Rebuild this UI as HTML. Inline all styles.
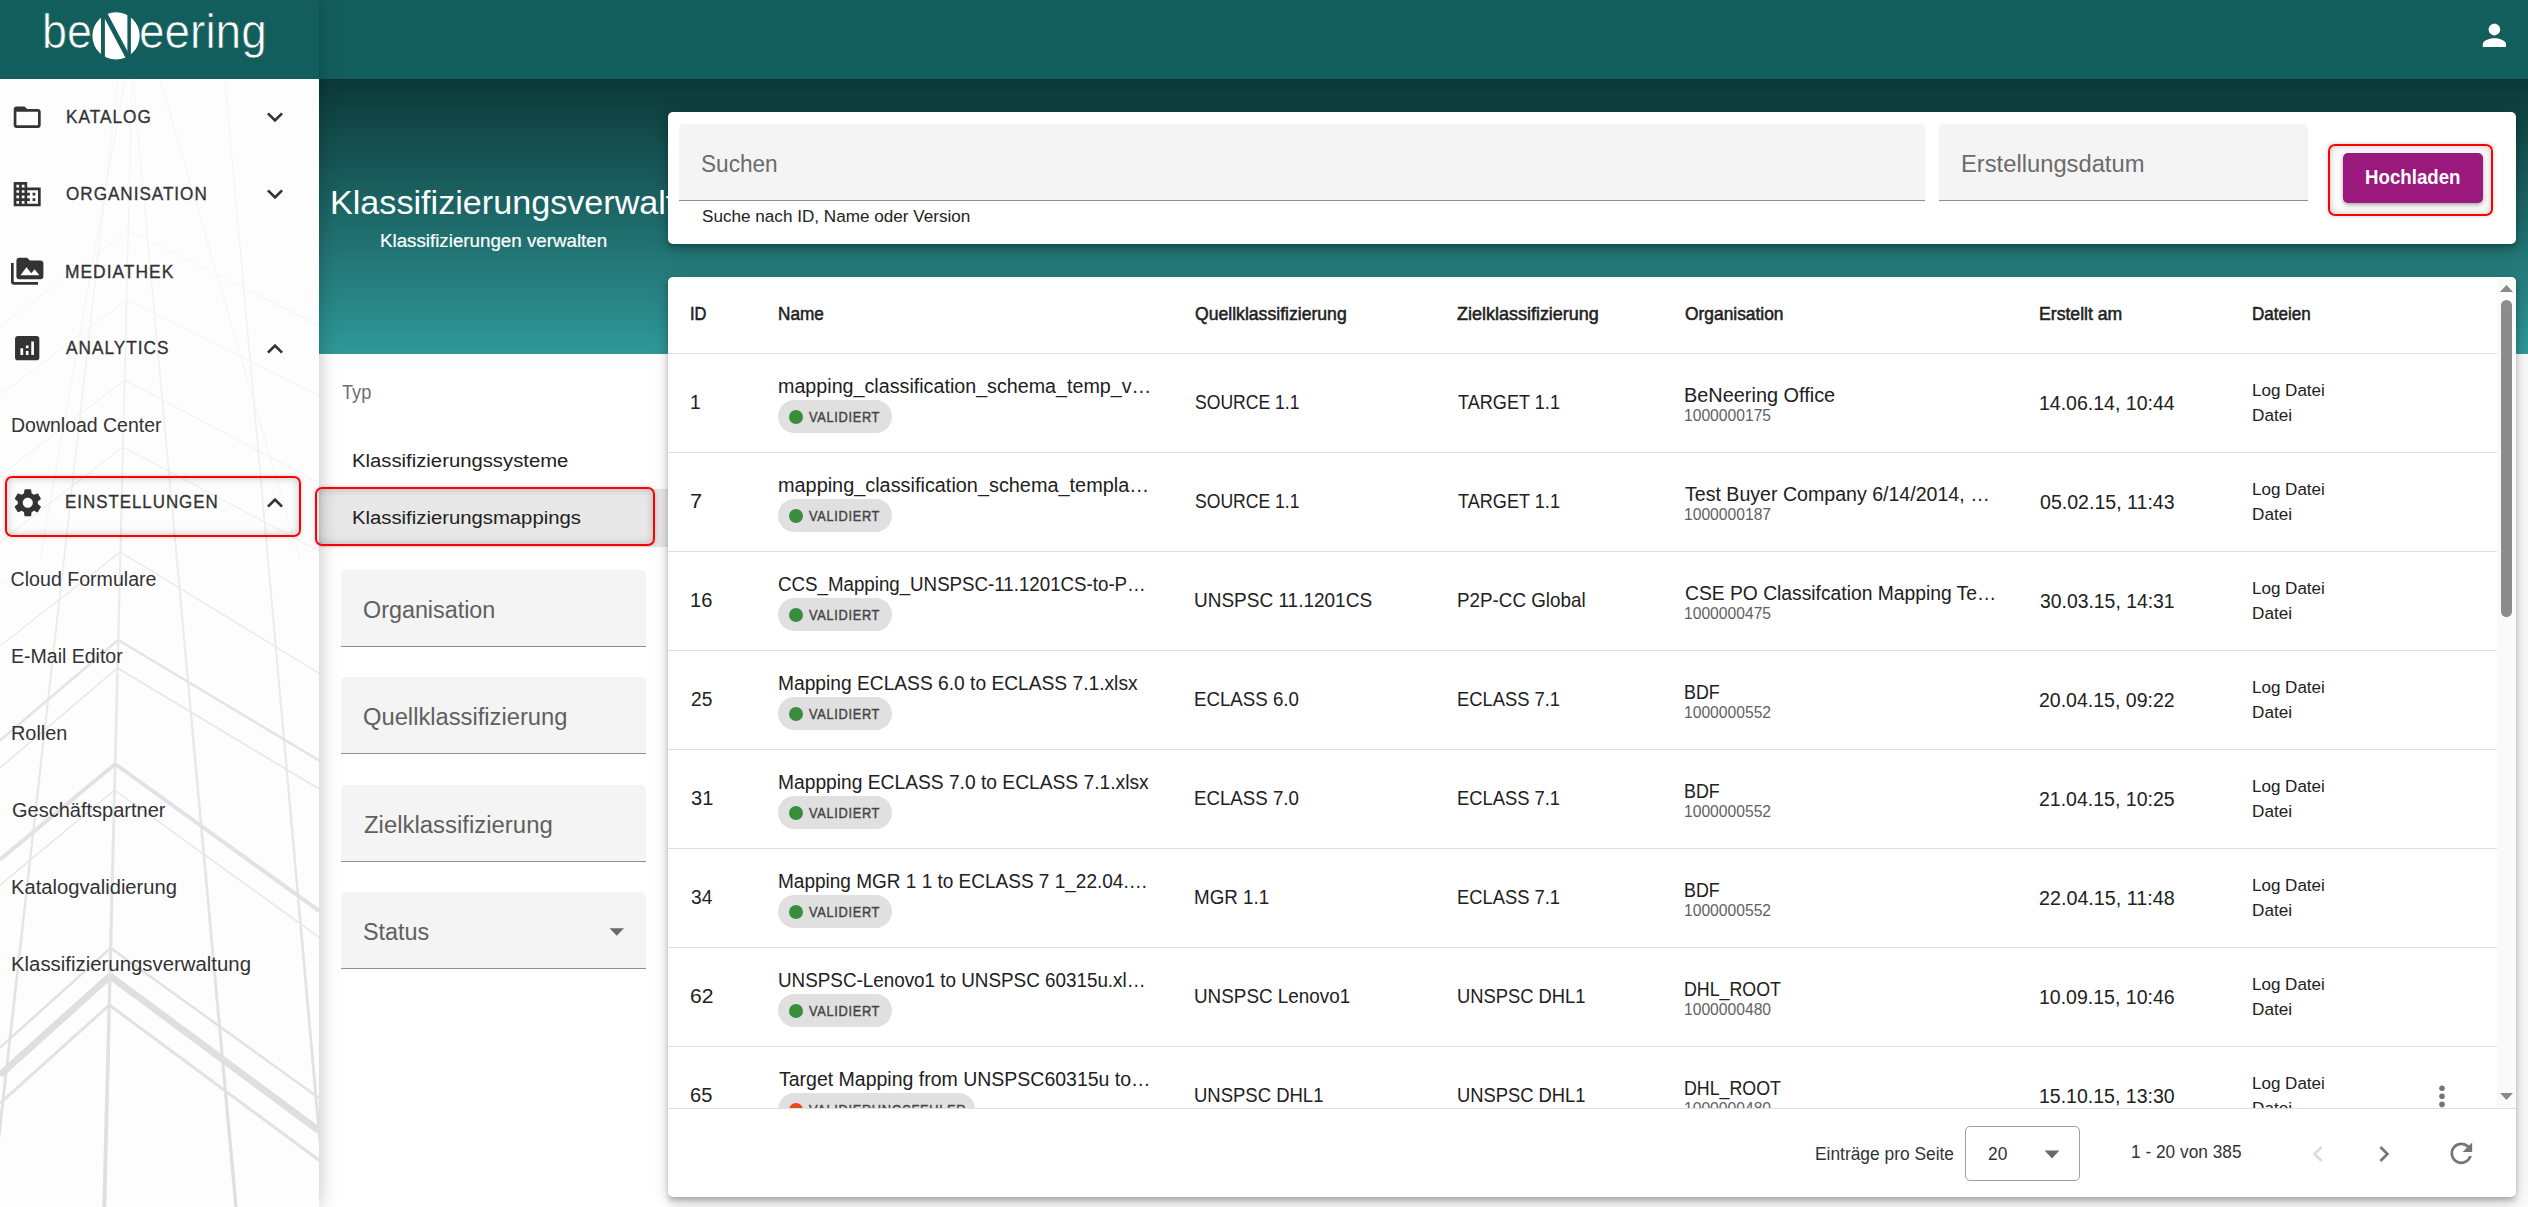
<!DOCTYPE html>
<html><head><meta charset="utf-8"><title>Klassifizierungsverwaltung</title>
<style>
html,body{margin:0;padding:0;width:2528px;height:1207px;overflow:hidden;background:#fafafa;font-family:"Liberation Sans",sans-serif;}
.a{position:absolute;}
.t{position:absolute;white-space:nowrap;transform-origin:0 0;font-family:"Liberation Sans",sans-serif;}
.cg{position:absolute;left:0;top:0;width:2528px;height:1207px;}
.fld{position:absolute;background:#f4f4f4;border-radius:5px 5px 0 0;border-bottom:1px solid #8f8f8f;box-sizing:border-box;}
.hl{position:absolute;left:668px;width:1829px;height:1px;background:#e0e0e0;}
.chip{position:absolute;left:778px;height:33px;border-radius:17px;background:#e0e0e0;}
.dot{position:absolute;left:10.9px;top:9.7px;width:14px;height:14px;border-radius:50%;}
.box{position:absolute;border:2px solid #ff0000;border-radius:7px;box-sizing:border-box;box-shadow:inset 0 0 9px rgba(0,0,0,.22),0 0 5px rgba(0,0,0,.18);}
svg{position:absolute;overflow:visible;}
</style></head><body>
<!-- top bar -->
<div class="a" style="left:0;top:0;width:2528px;height:79px;background:#125e5d"></div>
<!-- header gradient -->
<div class="a" style="left:319px;top:79px;width:2209px;height:275px;background:linear-gradient(#0c3838,#2f9898)"></div>
<!-- filter panel -->
<div class="a" style="left:319px;top:354px;width:349px;height:853px;background:#fff"></div>
<div class="a" style="left:319px;top:489px;width:349px;height:58px;background:#e8e8e8"></div>
<div class="fld" style="left:341px;top:570px;width:305px;height:77px"></div>
<div class="fld" style="left:341px;top:677px;width:305px;height:77px"></div>
<div class="fld" style="left:341px;top:785px;width:305px;height:77px"></div>
<div class="fld" style="left:341px;top:892px;width:305px;height:77px"></div>
<svg style="left:0;top:0" width="1" height="1"><polygon points="609.5,928.2 624,928.2 616.75,935.7" fill="#6a6a6a"/></svg>

<!-- sidebar -->
<div class="a" style="left:0;top:0;width:319px;height:1207px;background:#fdfdfd;box-shadow:0 0 18px rgba(0,0,0,.25);overflow:hidden">
 <div class="a" style="left:0;top:0;width:319px;height:79px;background:#125e5d"></div>
 <svg style="left:0;top:0" width="319" height="1207"><defs><linearGradient id="vg" gradientUnits="userSpaceOnUse" x1="0" y1="79" x2="0" y2="1207"><stop offset="0" stop-color="#f5f5f5"/><stop offset="0.35" stop-color="#eeeeee"/><stop offset="1" stop-color="#dedede"/></linearGradient></defs><g fill="none" stroke-linecap="butt"><polygon fill="url(#vg)" points="131.6,79.0 102.3,1207.0 106.3,1207.0 132.4,79.0"/><polygon fill="url(#vg)" points="117.6,79.0 -10.5,1206.8 -7.5,1207.2 118.4,79.0"/><polygon fill="url(#vg)" points="132.6,79.0 234.3,1207.2 237.7,1206.8 133.4,79.0"/><polygon fill="url(#vg)" points="224.6,79.0 318.5,1142.1 321.5,1141.9 225.4,79.0"/><line x1="125.0" y1="79.0" x2="40.0" y2="560.0" stroke="#f3f3f3" stroke-width="1"/><line x1="160.0" y1="79.0" x2="300.0" y2="560.0" stroke="#f3f3f3" stroke-width="1"/><line x1="128.3" y1="230.0" x2="0.0" y2="326.2" stroke="#f4f4f4" stroke-width="1"/><line x1="128.3" y1="230.0" x2="319.0" y2="325.4" stroke="#f4f4f4" stroke-width="1"/><line x1="126.6" y1="300.0" x2="0.0" y2="394.9" stroke="#f2f2f2" stroke-width="1"/><line x1="126.6" y1="300.0" x2="319.0" y2="396.2" stroke="#f2f2f2" stroke-width="1"/><line x1="124.6" y1="380.0" x2="0.0" y2="475.9" stroke="#efefef" stroke-width="1"/><line x1="124.6" y1="380.0" x2="319.0" y2="483.0" stroke="#efefef" stroke-width="1"/><line x1="123.0" y1="447.0" x2="0.0" y2="541.7" stroke="#ebebeb" stroke-width="1"/><line x1="123.0" y1="447.0" x2="319.0" y2="550.9" stroke="#ebebeb" stroke-width="1"/><line x1="120.4" y1="552.0" x2="0.0" y2="645.9" stroke="#e8e8e8" stroke-width="1.2"/><line x1="120.4" y1="552.0" x2="319.0" y2="673.2" stroke="#e8e8e8" stroke-width="1.2"/><line x1="118.2" y1="640.0" x2="0.0" y2="740.5" stroke="#e4e4e4" stroke-width="2.5"/><line x1="118.2" y1="640.0" x2="319.0" y2="760.5" stroke="#e4e4e4" stroke-width="2.5"/><line x1="117.5" y1="668.0" x2="0.0" y2="767.9" stroke="#e6e6e6" stroke-width="1.5"/><line x1="117.5" y1="668.0" x2="319.0" y2="788.9" stroke="#e6e6e6" stroke-width="1.5"/><line x1="115.2" y1="764.0" x2="0.0" y2="859.6" stroke="#e2e2e2" stroke-width="4"/><line x1="115.2" y1="764.0" x2="319.0" y2="910.8" stroke="#e2e2e2" stroke-width="4"/><line x1="114.5" y1="790.0" x2="0.0" y2="885.1" stroke="#e6e6e6" stroke-width="1.5"/><line x1="114.5" y1="790.0" x2="319.0" y2="937.2" stroke="#e6e6e6" stroke-width="1.5"/><line x1="110.7" y1="948.0" x2="0.0" y2="1047.6" stroke="#e2e2e2" stroke-width="2.5"/><line x1="110.7" y1="948.0" x2="319.0" y2="1098.0" stroke="#e2e2e2" stroke-width="2.5"/><line x1="110.0" y1="976.0" x2="0.0" y2="1075.0" stroke="#dfdfdf" stroke-width="7"/><line x1="110.0" y1="976.0" x2="319.0" y2="1130.7" stroke="#dfdfdf" stroke-width="7"/><line x1="109.3" y1="1005.0" x2="0.0" y2="1103.3" stroke="#e2e2e2" stroke-width="3"/><line x1="109.3" y1="1005.0" x2="319.0" y2="1160.2" stroke="#e2e2e2" stroke-width="3"/></g></svg>
 <!-- logo circle N -->
 <svg style="left:0;top:0" width="319" height="79">
  <defs><clipPath id="lc"><circle cx="116.05" cy="35.85" r="24.6"/></clipPath></defs>
  <circle cx="116.05" cy="35.85" r="23.65" fill="#fff"/>
  <g clip-path="url(#lc)" fill="#125e5d">
  <rect x="101" y="8" width="3.9" height="56"/>
  <rect x="127.4" y="8" width="3.5" height="56"/>
  <polygon points="101,11.55 106.7,12 131.1,58 127.75,62"/>
  </g>
 </svg>
 <!-- icons -->
 <svg style="left:11.2px;top:100.7px" width="32.4" height="32.4" viewBox="0 0 24 24"><path fill="#333" d="M20 6h-8l-2-2H4c-1.1 0-1.99.9-1.99 2L2 18c0 1.1.9 2 2 2h16c1.1 0 2-.9 2-2V8c0-1.1-.9-2-2-2zm0 12H4V8h16v10z"/></svg>
 <svg style="left:11.4px;top:177.8px" width="32.4" height="32.4" viewBox="0 0 24 24"><path fill="#333" d="M12 7V3H2v18h20V7H12zM6 19H4v-2h2v2zm0-4H4v-2h2v2zm0-4H4V9h2v2zm0-4H4V5h2v2zm4 12H8v-2h2v2zm0-4H8v-2h2v2zm0-4H8V9h2v2zm0-4H8V5h2v2zm10 12h-8v-2h2v-2h-2v-2h2v-2h-2V9h8v10zm-2-8h-2v2h2v-2zm0 4h-2v2h2v-2z"/></svg>
 <svg style="left:11.1px;top:255.2px" width="32.4" height="32.4" viewBox="0 0 24 24"><path fill="#333" d="M2 6H0v5h.01L0 20c0 1.1.9 2 2 2h18v-2H2V6zm20-2h-8l-2-2H6c-1.1 0-1.99.9-1.99 2L4 16c0 1.1.9 2 2 2h16c1.1 0 2-.9 2-2V6c0-1.1-.9-2-2-2zM7 15l4.5-6 3.5 4.51 2.5-3.01L21 15H7z"/></svg>
 <svg style="left:11.1px;top:332.2px" width="32.4" height="32.4" viewBox="0 0 24 24"><path fill="#333" d="M19 3H5c-1.1 0-2 .9-2 2v14c0 1.1.9 2 2 2h14c1.1 0 2-.9 2-2V5c0-1.1-.9-2-2-2zM9 17H7v-5h2v5zm4 0h-2v-3h2v3zm0-5h-2v-2h2v2zm4 5h-2V7h2v10z"/></svg>
 <svg style="left:10.65px;top:485.7px" width="33.6" height="33.6" viewBox="0 0 24 24"><path fill="#333" d="M19.14 12.94c.04-.3.06-.61.06-.94 0-.32-.02-.64-.07-.94l2.03-1.58c.18-.14.23-.41.12-.61l-1.92-3.32c-.12-.22-.37-.29-.59-.22l-2.39.96c-.5-.38-1.03-.7-1.62-.94l-.36-2.54c-.04-.24-.24-.41-.48-.41h-3.84c-.24 0-.43.17-.47.41l-.36 2.540c-.59.24-1.13.57-1.62.94l-2.39-.96c-.22-.08-.47 0-.59.22L2.74 8.870c-.12.21-.08.47.12.61l2.03 1.58c-.05.3-.09.63-.09.94s.02.64.07.94l-2.03 1.58c-.18.14-.23.41-.12.61l1.92 3.32c.12.22.37.29.59.22l2.39-.96c.5.38 1.03.7 1.62.94l.36 2.54c.05.24.24.41.48.41h3.84c.24 0 .44-.17.47-.41l.36-2.54c.59-.24 1.13-.56 1.62-.94l2.39.96c.22.08.47 0 .59-.22l1.92-3.32c.12-.22.07-.47-.12-.61l-2.01-1.580zM12 15.6c-1.98 0-3.6-1.62-3.6-3.6s1.62-3.6 3.6-3.6 3.6 1.62 3.6 3.6-1.62 3.6-3.6 3.6z"/></svg>
 <svg style="left:258.9px;top:100.9px" width="32" height="32" viewBox="0 0 24 24"><path fill="#333" d="M16.59 8.59L12 13.17 7.41 8.59 6 10l6 6 6-6z"/></svg>
 <svg style="left:258.9px;top:178.4px" width="32" height="32" viewBox="0 0 24 24"><path fill="#333" d="M16.59 8.59L12 13.17 7.41 8.59 6 10l6 6 6-6z"/></svg>
 <svg style="left:258.9px;top:332.6px" width="32" height="32" viewBox="0 0 24 24"><path fill="#333" d="M12 8l-6 6 1.41 1.41L12 10.83l4.59 4.58L18 14z"/></svg>
 <svg style="left:258.9px;top:486.75px" width="32" height="32" viewBox="0 0 24 24"><path fill="#333" d="M12 8l-6 6 1.41 1.41L12 10.83l4.59 4.58L18 14z"/></svg>
</div>
<!-- user icon -->
<svg style="left:2476.6px;top:18.3px" width="34.8" height="34.8" viewBox="0 0 24 24"><path fill="#fff" d="M12 12c2.21 0 4-1.79 4-4s-1.79-4-4-4-4 1.79-4 4 1.79 4 4 4zm0 2c-2.670 0-8 1.34-8 4v2h16v-2c0-2.66-5.33-4-8-4z"/></svg>

<!-- search card -->
<div class="a" style="left:668px;top:112px;width:1848px;height:132px;background:#fff;border-radius:5px;box-shadow:0 3px 5px -1px rgba(0,0,0,.2),0 6px 10px 0 rgba(0,0,0,.14),0 1px 18px 0 rgba(0,0,0,.12)"></div>
<div class="fld" style="left:679px;top:124px;width:1246px;height:77px"></div>
<div class="fld" style="left:1939px;top:124px;width:369px;height:77px"></div>
<div class="a" style="left:2343px;top:153px;width:140px;height:50px;background:#9b197c;border-radius:5px;box-shadow:0 2px 4px rgba(0,0,0,.35)"></div>

<!-- table card -->
<div class="a" style="left:668px;top:277px;width:1848px;height:920px;background:#fff;border-radius:5px;box-shadow:0 3px 5px -1px rgba(0,0,0,.2),0 6px 10px 0 rgba(0,0,0,.14),0 1px 18px 0 rgba(0,0,0,.12);overflow:hidden">
 <div class="a" style="left:1829px;top:0;width:19px;height:831px;background:#fafafa"></div>
</div>
<div class="hl" style="top:353px"></div>
<div class="cg" style="clip-path:inset(353px 31px 99px 668px)">
 <div class="hl" style="top:452px"></div><div class="hl" style="top:551px"></div><div class="hl" style="top:650px"></div>
 <div class="hl" style="top:749px"></div><div class="hl" style="top:848px"></div><div class="hl" style="top:947px"></div><div class="hl" style="top:1046px"></div>
 <div class="chip" style="top:400px;width:114px"><div class="dot" style="background:#388e3c"></div></div>
 <div class="chip" style="top:499px;width:114px"><div class="dot" style="background:#388e3c"></div></div>
 <div class="chip" style="top:598px;width:114px"><div class="dot" style="background:#388e3c"></div></div>
 <div class="chip" style="top:697px;width:114px"><div class="dot" style="background:#388e3c"></div></div>
 <div class="chip" style="top:796px;width:114px"><div class="dot" style="background:#388e3c"></div></div>
 <div class="chip" style="top:895px;width:114px"><div class="dot" style="background:#388e3c"></div></div>
 <div class="chip" style="top:994px;width:114px"><div class="dot" style="background:#388e3c"></div></div>
 <div class="chip" style="top:1093px;width:197px"><div class="dot" style="background:#e64a19"></div></div>
 <svg style="left:0;top:0" width="1" height="1"><g fill="#757575"><circle cx="2442" cy="1088.2" r="2.8"/><circle cx="2442" cy="1096.3" r="2.8"/><circle cx="2442" cy="1104.4" r="2.8"/></g></svg>
</div>
<div class="a" style="left:668px;top:1108px;width:1848px;height:1px;background:#e0e0e0"></div>
<!-- scrollbar -->
<svg style="left:0;top:0" width="1" height="1">
 <polygon points="2500,292 2513,292 2506.5,285" fill="#8a8a8a"/>
 <rect x="2501" y="300" width="11" height="317" rx="5.5" fill="#8c8c8c"/>
 <polygon points="2500,1093 2513,1093 2506.5,1100" fill="#8a8a8a"/>
</svg>
<!-- pagination -->
<div class="a" style="left:1965px;top:1126px;width:115px;height:55px;border:1px solid #a0a0a0;border-radius:5px;box-sizing:border-box"></div>
<svg style="left:0;top:0" width="1" height="1"><polygon points="2044.6,1150.6 2059.4,1150.6 2052,1158.4" fill="#6a6a6a"/></svg>
<svg style="left:2302.3px;top:1137.9px" width="32" height="32" viewBox="0 0 24 24"><path fill="#dcdcdc" d="M15.41 7.41L14 6l-6 6 6 6 1.41-1.41L10.83 12z"/></svg>
<svg style="left:2368.4px;top:1137.9px" width="32" height="32" viewBox="0 0 24 24"><path fill="#757575" d="M10 6L8.59 7.41 13.17 12l-4.58 4.59L10 18l6-6z"/></svg>
<svg style="left:2444.9px;top:1137.3px" width="32.6" height="32.6" viewBox="0 0 24 24"><path fill="#757575" d="M17.65 6.35C16.2 4.9 14.21 4 12 4c-4.42 0-7.99 3.58-7.99 8s3.57 8 7.99 8c3.73 0 6.84-2.55 7.73-6h-2.08c-.82 2.33-3.04 4-5.65 4-3.31 0-6-2.69-6-6s2.69-6 6-6c1.66 0 3.140.69 4.22 1.78L13 11h7V4l-2.35 2.35z"/></svg>

<div class="t" style="left:66.19px;top:107.32px;font-size:19.0px;line-height:19.0px;color:#333333;transform:scaleX(0.9068);letter-spacing:1.1px;-webkit-text-stroke:0.35px #333333;">KATALOG</div>
<div class="t" style="left:66.30px;top:184.12px;font-size:19.0px;line-height:19.0px;color:#333333;transform:scaleX(0.9001);letter-spacing:1.1px;-webkit-text-stroke:0.35px #333333;">ORGANISATION</div>
<div class="t" style="left:65.38px;top:261.52px;font-size:19.0px;line-height:19.0px;color:#333333;transform:scaleX(0.9161);letter-spacing:1.1px;-webkit-text-stroke:0.35px #333333;">MEDIATHEK</div>
<div class="t" style="left:66.30px;top:338.22px;font-size:19.0px;line-height:19.0px;color:#333333;transform:scaleX(0.9074);letter-spacing:1.1px;-webkit-text-stroke:0.35px #333333;">ANALYTICS</div>
<div class="t" style="left:65.41px;top:492.32px;font-size:19.0px;line-height:19.0px;color:#333333;transform:scaleX(0.8902);letter-spacing:1.1px;-webkit-text-stroke:0.35px #333333;">EINSTELLUNGEN</div>
<div class="t" style="left:10.61px;top:416.21px;font-size:19.6px;line-height:19.6px;color:#333333;transform:scaleX(0.9943);">Download Center</div>
<div class="t" style="left:10.60px;top:570.41px;font-size:19.6px;line-height:19.6px;color:#333333;">Cloud Formulare</div>
<div class="t" style="left:10.60px;top:647.41px;font-size:19.6px;line-height:19.6px;color:#333333;transform:scaleX(0.9962);">E-Mail Editor</div>
<div class="t" style="left:10.59px;top:724.41px;font-size:19.6px;line-height:19.6px;color:#333333;transform:scaleX(1.0140);">Rollen</div>
<div class="t" style="left:11.60px;top:801.41px;font-size:19.6px;line-height:19.6px;color:#333333;transform:scaleX(1.0214);">Geschäftspartner</div>
<div class="t" style="left:10.57px;top:878.41px;font-size:19.6px;line-height:19.6px;color:#333333;transform:scaleX(1.0294);">Katalogvalidierung</div>
<div class="t" style="left:10.56px;top:955.41px;font-size:19.6px;line-height:19.6px;color:#333333;transform:scaleX(1.0394);">Klassifizierungsverwaltung</div>
<div class="t" style="left:42.00px;top:8.07px;font-size:48.0px;line-height:48.0px;color:#ffffff;transform:scaleX(0.9344);-webkit-text-stroke:0.7px #125e5d;">be</div>
<div class="t" style="left:138.89px;top:8.07px;font-size:48.0px;line-height:48.0px;color:#ffffff;transform:scaleX(0.9570);-webkit-text-stroke:0.7px #125e5d;">eering</div>
<div class="t" style="left:380.16px;top:231.66px;font-size:18.0px;line-height:18.0px;color:#ffffff;transform:scaleX(1.0412);-webkit-text-stroke:0.2px #ffffff;">Klassifizierungen verwalten</div>
<div class="t" style="left:342.30px;top:381.92px;font-size:20.3px;line-height:20.3px;color:#6f6f6f;transform:scaleX(0.8979);">Typ</div>
<div class="t" style="left:351.74px;top:450.55px;font-size:19.2px;line-height:19.2px;color:#212121;transform:scaleX(1.0568);">Klassifizierungssysteme</div>
<div class="t" style="left:351.74px;top:508.45px;font-size:19.2px;line-height:19.2px;color:#212121;transform:scaleX(1.0572);">Klassifizierungsmappings</div>
<div class="t" style="left:362.99px;top:599.03px;font-size:23.0px;line-height:23.0px;color:#5f5f5f;transform:scaleX(1.0146);">Organisation</div>
<div class="t" style="left:362.97px;top:706.23px;font-size:23.0px;line-height:23.0px;color:#5f5f5f;transform:scaleX(1.0318);">Quellklassifizierung</div>
<div class="t" style="left:364.00px;top:813.83px;font-size:23.0px;line-height:23.0px;color:#5f5f5f;transform:scaleX(1.0398);">Zielklassifizierung</div>
<div class="t" style="left:362.98px;top:921.03px;font-size:23.0px;line-height:23.0px;color:#5f5f5f;transform:scaleX(1.0156);">Status</div>
<div class="t" style="left:700.93px;top:152.78px;font-size:23.3px;line-height:23.3px;color:#6b6b6b;transform:scaleX(0.9707);">Suchen</div>
<div class="t" style="left:1960.98px;top:153.08px;font-size:23.3px;line-height:23.3px;color:#6b6b6b;transform:scaleX(1.0192);">Erstellungsdatum</div>
<div class="t" style="left:701.90px;top:209.19px;font-size:16.9px;line-height:16.9px;color:#222222;transform:scaleX(1.0133);">Suche nach ID, Name oder Version</div>
<div class="t" style="left:2364.88px;top:167.03px;font-size:20.4px;line-height:20.4px;color:#ffffff;font-weight:bold;transform:scaleX(0.9165);">Hochladen</div>
<div class="t" style="left:689.81px;top:305.32px;font-size:18.4px;line-height:18.4px;color:#222222;transform:scaleX(0.8942);-webkit-text-stroke:0.55px #222222;">ID</div>
<div class="t" style="left:777.67px;top:305.32px;font-size:18.4px;line-height:18.4px;color:#222222;transform:scaleX(0.9325);-webkit-text-stroke:0.55px #222222;">Name</div>
<div class="t" style="left:1195.30px;top:305.32px;font-size:18.4px;line-height:18.4px;color:#222222;transform:scaleX(0.9576);-webkit-text-stroke:0.55px #222222;">Quellklassifizierung</div>
<div class="t" style="left:1457.30px;top:305.32px;font-size:18.4px;line-height:18.4px;color:#222222;transform:scaleX(0.9772);-webkit-text-stroke:0.55px #222222;">Zielklassifizierung</div>
<div class="t" style="left:1684.60px;top:305.32px;font-size:18.4px;line-height:18.4px;color:#222222;transform:scaleX(0.9448);-webkit-text-stroke:0.55px #222222;">Organisation</div>
<div class="t" style="left:2038.54px;top:305.32px;font-size:18.4px;line-height:18.4px;color:#222222;transform:scaleX(0.9586);-webkit-text-stroke:0.55px #222222;">Erstellt am</div>
<div class="t" style="left:2252.37px;top:305.32px;font-size:18.4px;line-height:18.4px;color:#222222;transform:scaleX(0.9266);-webkit-text-stroke:0.55px #222222;">Dateien</div>
<div class="t" style="left:1815.39px;top:1144.25px;font-size:19.2px;line-height:19.2px;color:#333333;transform:scaleX(0.9051);">Einträge pro Seite</div>
<div class="t" style="left:1987.60px;top:1144.25px;font-size:19.2px;line-height:19.2px;color:#333333;transform:scaleX(0.9046);">20</div>
<div class="t" style="left:2130.50px;top:1142.35px;font-size:19.2px;line-height:19.2px;color:#333333;transform:scaleX(0.9008);">1 - 20 von 385</div><div class="cg" style="clip-path:inset(79px 1860px 853px 319px)"><div class="t" style="left:330.09px;top:184.52px;font-size:34.0px;line-height:34.0px;color:#ffffff;transform:scaleX(1.0042);">Klassifizierungsverwaltung</div></div>
<div class="cg" style="clip-path:inset(353px 31px 99px 668px)"><div class="t" style="left:689.72px;top:392.81px;font-size:19.6px;line-height:19.6px;color:#212121;transform:scaleX(0.9778);">1</div><div class="t" style="left:777.59px;top:377.01px;font-size:19.6px;line-height:19.6px;color:#212121;transform:scaleX(1.0052);">mapping_classification_schema_temp_v…</div><div class="t" style="left:1195.10px;top:392.84px;font-size:19.8px;line-height:19.8px;color:#212121;transform:scaleX(0.8884);">SOURCE 1.1</div><div class="t" style="left:1458.00px;top:392.84px;font-size:19.8px;line-height:19.8px;color:#212121;transform:scaleX(0.9154);">TARGET 1.1</div><div class="t" style="left:1683.78px;top:386.19px;font-size:19.5px;line-height:19.5px;color:#212121;transform:scaleX(1.0206);">BeNeering Office</div><div class="t" style="left:1683.84px;top:407.22px;font-size:16.4px;line-height:16.4px;color:#616161;transform:scaleX(0.9551);">1000000175</div><div class="t" style="left:2038.92px;top:392.57px;font-size:20.0px;line-height:20.0px;color:#212121;transform:scaleX(0.9754);">14.06.14, 10:44</div><div class="t" style="left:2252.21px;top:381.94px;font-size:17.2px;line-height:17.2px;color:#212121;transform:scaleX(0.9894);">Log Datei</div><div class="t" style="left:2252.20px;top:406.54px;font-size:17.2px;line-height:17.2px;color:#212121;transform:scaleX(0.9973);">Datei</div><div class="t" style="left:809.30px;top:409.30px;font-size:15.0px;line-height:15.0px;color:#444444;transform:scaleX(0.8534);letter-spacing:0.8px;-webkit-text-stroke:0.45px #444444;">VALIDIERT</div><div class="t" style="left:689.59px;top:491.81px;font-size:19.6px;line-height:19.6px;color:#212121;transform:scaleX(1.1111);">7</div><div class="t" style="left:777.59px;top:476.01px;font-size:19.6px;line-height:19.6px;color:#212121;transform:scaleX(1.0140);">mapping_classification_schema_templa…</div><div class="t" style="left:1195.10px;top:491.84px;font-size:19.8px;line-height:19.8px;color:#212121;transform:scaleX(0.8884);">SOURCE 1.1</div><div class="t" style="left:1458.00px;top:491.84px;font-size:19.8px;line-height:19.8px;color:#212121;transform:scaleX(0.9154);">TARGET 1.1</div><div class="t" style="left:1684.80px;top:485.19px;font-size:19.5px;line-height:19.5px;color:#212121;transform:scaleX(1.0040);">Test Buyer Company 6/14/2014, …</div><div class="t" style="left:1683.84px;top:506.22px;font-size:16.4px;line-height:16.4px;color:#616161;transform:scaleX(0.9551);">1000000187</div><div class="t" style="left:2039.90px;top:491.57px;font-size:20.0px;line-height:20.0px;color:#212121;transform:scaleX(0.9788);">05.02.15, 11:43</div><div class="t" style="left:2252.21px;top:480.94px;font-size:17.2px;line-height:17.2px;color:#212121;transform:scaleX(0.9894);">Log Datei</div><div class="t" style="left:2252.20px;top:505.54px;font-size:17.2px;line-height:17.2px;color:#212121;transform:scaleX(0.9973);">Datei</div><div class="t" style="left:809.30px;top:508.30px;font-size:15.0px;line-height:15.0px;color:#444444;transform:scaleX(0.8534);letter-spacing:0.8px;-webkit-text-stroke:0.45px #444444;">VALIDIERT</div><div class="t" style="left:689.68px;top:590.81px;font-size:19.6px;line-height:19.6px;color:#212121;transform:scaleX(1.0241);">16</div><div class="t" style="left:777.64px;top:575.01px;font-size:19.6px;line-height:19.6px;color:#212121;transform:scaleX(0.9550);">CCS_Mapping_UNSPSC-11.1201CS-to-P…</div><div class="t" style="left:1194.14px;top:590.84px;font-size:19.8px;line-height:19.8px;color:#212121;transform:scaleX(0.9601);">UNSPSC 11.1201CS</div><div class="t" style="left:1457.05px;top:590.84px;font-size:19.8px;line-height:19.8px;color:#212121;transform:scaleX(0.9512);">P2P-CC Global</div><div class="t" style="left:1684.80px;top:584.19px;font-size:19.5px;line-height:19.5px;color:#212121;transform:scaleX(0.9879);">CSE PO Classifcation Mapping Te…</div><div class="t" style="left:1683.84px;top:605.22px;font-size:16.4px;line-height:16.4px;color:#616161;transform:scaleX(0.9551);">1000000475</div><div class="t" style="left:2039.90px;top:590.57px;font-size:20.0px;line-height:20.0px;color:#212121;transform:scaleX(0.9684);">30.03.15, 14:31</div><div class="t" style="left:2252.21px;top:579.94px;font-size:17.2px;line-height:17.2px;color:#212121;transform:scaleX(0.9894);">Log Datei</div><div class="t" style="left:2252.20px;top:604.54px;font-size:17.2px;line-height:17.2px;color:#212121;transform:scaleX(0.9973);">Datei</div><div class="t" style="left:809.30px;top:607.30px;font-size:15.0px;line-height:15.0px;color:#444444;transform:scaleX(0.8534);letter-spacing:0.8px;-webkit-text-stroke:0.45px #444444;">VALIDIERT</div><div class="t" style="left:690.70px;top:689.81px;font-size:19.6px;line-height:19.6px;color:#212121;transform:scaleX(0.9773);">25</div><div class="t" style="left:777.62px;top:674.01px;font-size:19.6px;line-height:19.6px;color:#212121;transform:scaleX(0.9797);">Mapping ECLASS 6.0 to ECLASS 7.1.xlsx</div><div class="t" style="left:1194.16px;top:689.84px;font-size:19.8px;line-height:19.8px;color:#212121;transform:scaleX(0.9441);">ECLASS 6.0</div><div class="t" style="left:1457.07px;top:689.84px;font-size:19.8px;line-height:19.8px;color:#212121;transform:scaleX(0.9277);">ECLASS 7.1</div><div class="t" style="left:1683.88px;top:683.19px;font-size:19.5px;line-height:19.5px;color:#212121;transform:scaleX(0.9163);">BDF</div><div class="t" style="left:1683.84px;top:704.22px;font-size:16.4px;line-height:16.4px;color:#616161;transform:scaleX(0.9551);">1000000552</div><div class="t" style="left:2038.92px;top:689.57px;font-size:20.0px;line-height:20.0px;color:#212121;transform:scaleX(0.9754);">20.04.15, 09:22</div><div class="t" style="left:2252.21px;top:678.94px;font-size:17.2px;line-height:17.2px;color:#212121;transform:scaleX(0.9894);">Log Datei</div><div class="t" style="left:2252.20px;top:703.54px;font-size:17.2px;line-height:17.2px;color:#212121;transform:scaleX(0.9973);">Datei</div><div class="t" style="left:809.30px;top:706.30px;font-size:15.0px;line-height:15.0px;color:#444444;transform:scaleX(0.8534);letter-spacing:0.8px;-webkit-text-stroke:0.45px #444444;">VALIDIERT</div><div class="t" style="left:690.70px;top:788.81px;font-size:19.6px;line-height:19.6px;color:#212121;transform:scaleX(1.0241);">31</div><div class="t" style="left:777.62px;top:773.01px;font-size:19.6px;line-height:19.6px;color:#212121;transform:scaleX(0.9808);">Mappping ECLASS 7.0 to ECLASS 7.1.xlsx</div><div class="t" style="left:1194.16px;top:788.84px;font-size:19.8px;line-height:19.8px;color:#212121;transform:scaleX(0.9441);">ECLASS 7.0</div><div class="t" style="left:1457.07px;top:788.84px;font-size:19.8px;line-height:19.8px;color:#212121;transform:scaleX(0.9277);">ECLASS 7.1</div><div class="t" style="left:1683.88px;top:782.19px;font-size:19.5px;line-height:19.5px;color:#212121;transform:scaleX(0.9163);">BDF</div><div class="t" style="left:1683.84px;top:803.22px;font-size:16.4px;line-height:16.4px;color:#616161;transform:scaleX(0.9551);">1000000552</div><div class="t" style="left:2038.92px;top:788.57px;font-size:20.0px;line-height:20.0px;color:#212121;transform:scaleX(0.9754);">21.04.15, 10:25</div><div class="t" style="left:2252.21px;top:777.94px;font-size:17.2px;line-height:17.2px;color:#212121;transform:scaleX(0.9894);">Log Datei</div><div class="t" style="left:2252.20px;top:802.54px;font-size:17.2px;line-height:17.2px;color:#212121;transform:scaleX(0.9973);">Datei</div><div class="t" style="left:809.30px;top:805.30px;font-size:15.0px;line-height:15.0px;color:#444444;transform:scaleX(0.8534);letter-spacing:0.8px;-webkit-text-stroke:0.45px #444444;">VALIDIERT</div><div class="t" style="left:690.70px;top:887.81px;font-size:19.6px;line-height:19.6px;color:#212121;transform:scaleX(0.9773);">34</div><div class="t" style="left:777.63px;top:872.01px;font-size:19.6px;line-height:19.6px;color:#212121;transform:scaleX(0.9698);">Mapping MGR 1 1 to ECLASS 7 1_22.04.…</div><div class="t" style="left:1194.15px;top:887.84px;font-size:19.8px;line-height:19.8px;color:#212121;transform:scaleX(0.9495);">MGR 1.1</div><div class="t" style="left:1457.07px;top:887.84px;font-size:19.8px;line-height:19.8px;color:#212121;transform:scaleX(0.9277);">ECLASS 7.1</div><div class="t" style="left:1683.88px;top:881.19px;font-size:19.5px;line-height:19.5px;color:#212121;transform:scaleX(0.9163);">BDF</div><div class="t" style="left:1683.84px;top:902.22px;font-size:16.4px;line-height:16.4px;color:#616161;transform:scaleX(0.9551);">1000000552</div><div class="t" style="left:2038.91px;top:887.57px;font-size:20.0px;line-height:20.0px;color:#212121;transform:scaleX(0.9860);">22.04.15, 11:48</div><div class="t" style="left:2252.21px;top:876.94px;font-size:17.2px;line-height:17.2px;color:#212121;transform:scaleX(0.9894);">Log Datei</div><div class="t" style="left:2252.20px;top:901.54px;font-size:17.2px;line-height:17.2px;color:#212121;transform:scaleX(0.9973);">Datei</div><div class="t" style="left:809.30px;top:904.30px;font-size:15.0px;line-height:15.0px;color:#444444;transform:scaleX(0.8534);letter-spacing:0.8px;-webkit-text-stroke:0.45px #444444;">VALIDIERT</div><div class="t" style="left:689.62px;top:986.81px;font-size:19.6px;line-height:19.6px;color:#212121;transform:scaleX(1.0755);">62</div><div class="t" style="left:777.64px;top:971.01px;font-size:19.6px;line-height:19.6px;color:#212121;transform:scaleX(0.9615);">UNSPSC-Lenovo1 to UNSPSC 60315u.xl…</div><div class="t" style="left:1194.15px;top:986.84px;font-size:19.8px;line-height:19.8px;color:#212121;transform:scaleX(0.9531);">UNSPSC Lenovo1</div><div class="t" style="left:1457.07px;top:986.84px;font-size:19.8px;line-height:19.8px;color:#212121;transform:scaleX(0.9280);">UNSPSC DHL1</div><div class="t" style="left:1683.89px;top:980.19px;font-size:19.5px;line-height:19.5px;color:#212121;transform:scaleX(0.9129);">DHL_ROOT</div><div class="t" style="left:1683.84px;top:1001.22px;font-size:16.4px;line-height:16.4px;color:#616161;transform:scaleX(0.9551);">1000000480</div><div class="t" style="left:2038.92px;top:986.57px;font-size:20.0px;line-height:20.0px;color:#212121;transform:scaleX(0.9754);">10.09.15, 10:46</div><div class="t" style="left:2252.21px;top:975.94px;font-size:17.2px;line-height:17.2px;color:#212121;transform:scaleX(0.9894);">Log Datei</div><div class="t" style="left:2252.20px;top:1000.54px;font-size:17.2px;line-height:17.2px;color:#212121;transform:scaleX(0.9973);">Datei</div><div class="t" style="left:809.30px;top:1003.30px;font-size:15.0px;line-height:15.0px;color:#444444;transform:scaleX(0.8534);letter-spacing:0.8px;-webkit-text-stroke:0.45px #444444;">VALIDIERT</div><div class="t" style="left:689.68px;top:1085.81px;font-size:19.6px;line-height:19.6px;color:#212121;transform:scaleX(1.0241);">65</div><div class="t" style="left:778.60px;top:1070.01px;font-size:19.6px;line-height:19.6px;color:#212121;transform:scaleX(0.9947);">Target Mapping from UNSPSC60315u to…</div><div class="t" style="left:1194.17px;top:1085.84px;font-size:19.8px;line-height:19.8px;color:#212121;transform:scaleX(0.9345);">UNSPSC DHL1</div><div class="t" style="left:1457.07px;top:1085.84px;font-size:19.8px;line-height:19.8px;color:#212121;transform:scaleX(0.9280);">UNSPSC DHL1</div><div class="t" style="left:1683.89px;top:1079.19px;font-size:19.5px;line-height:19.5px;color:#212121;transform:scaleX(0.9129);">DHL_ROOT</div><div class="t" style="left:1683.84px;top:1100.22px;font-size:16.4px;line-height:16.4px;color:#616161;transform:scaleX(0.9551);">1000000480</div><div class="t" style="left:2038.92px;top:1085.57px;font-size:20.0px;line-height:20.0px;color:#212121;transform:scaleX(0.9754);">15.10.15, 13:30</div><div class="t" style="left:2252.21px;top:1074.94px;font-size:17.2px;line-height:17.2px;color:#212121;transform:scaleX(0.9894);">Log Datei</div><div class="t" style="left:2252.20px;top:1099.54px;font-size:17.2px;line-height:17.2px;color:#212121;transform:scaleX(0.9973);">Datei</div><div class="t" style="left:809.30px;top:1102.30px;font-size:15.0px;line-height:15.0px;color:#444444;transform:scaleX(0.8534);letter-spacing:0.8px;-webkit-text-stroke:0.45px #444444;">VALIDIERUNGSFEHLER</div></div>

<!-- annotation boxes -->
<div class="box" style="left:5px;top:475.5px;width:296px;height:61.5px"></div>
<div class="box" style="left:315px;top:486.5px;width:340px;height:59px"></div>
<div class="box" style="left:2328px;top:144px;width:165px;height:72px"></div>
</body></html>
